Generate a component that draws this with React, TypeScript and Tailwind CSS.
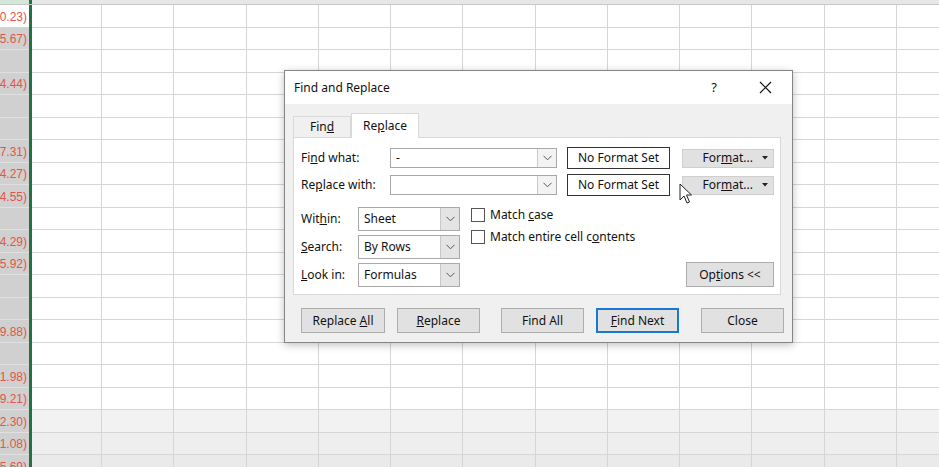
import React from "react";

const ROWS = 21;
const COLS = 12;
const vals: string[] = [
  "(1,890.23)",
  "(2,345.67)",
  "",
  "(1,234.44)",
  "",
  "",
  "(2,567.31)",
  "(3,214.27)",
  "(1,454.55)",
  "",
  "(2,114.29)",
  "(4,385.92)",
  "",
  "",
  "(1,239.88)",
  "",
  "(5,311.98)",
  "(4,369.21)",
  "(2,122.30)",
  "(1,461.08)",
  "(1,325.69)",
];

const rowBg = (r: number) =>
  r === 18 ? "bg-[#f2f2f2]" : r === 19 ? "bg-[#eeeeee]" : r >= 20 ? "bg-[#eaeaea]" : "bg-white";

function Chevron() {
  return (
    <svg width="9" height="6" viewBox="0 0 9 6" fill="none">
      <path d="M0.5 0.8 L4.5 4.8 L8.5 0.8" stroke="#555" strokeWidth="1" />
    </svg>
  );
}

function Combo({ w, text }: { w: number; text: string }) {
  return (
    <div className="flex h-[20px] border border-[#a9a9a9] bg-white" style={{ width: w }}>
      <div className="flex-1 pl-[5px] flex items-center text-[12px] leading-none">{text}</div>
      <div className="w-[19px] border-l border-[#c8c8c8] bg-[#f3f3f3] flex items-center justify-center">
        <Chevron />
      </div>
    </div>
  );
}

function Select({ text }: { text: string }) {
  return (
    <div className="flex h-[24px] w-[102px] border border-[#a9a9a9] bg-white">
      <div className="flex-1 pl-[5px] flex items-center text-[12px]">{text}</div>
      <div className="w-[19px] border-l border-[#c8c8c8] bg-[#e4e4e4] flex items-center justify-center">
        <Chevron />
      </div>
    </div>
  );
}

function FormatBtn() {
  return (
    <div className="ml-[12px] h-[19px] w-[92px] bg-[#e1e1e1] border border-[#cfcfcf] flex items-center justify-end pr-[5px] text-[12px]">
      <span>
        For<u>m</u>at...
      </span>
      <svg className="ml-[9px]" width="6" height="4" viewBox="0 0 6 4">
        <path d="M0 0 L6 0 L3 3.5 Z" fill="#222" />
      </svg>
    </div>
  );
}

function Btn({ children, w, ml, primary }: { children: React.ReactNode; w: number; ml: number; primary?: boolean }) {
  return (
    <div
      className={
        "h-[25px] flex items-center justify-center text-[12px] bg-[#e1e1e1] " +
        (primary ? "border-2 border-[#1a78d4]" : "border border-[#adadad]")
      }
      style={{ width: w, marginLeft: ml }}
    >
      {children}
    </div>
  );
}

function Checkbox({ children }: { children: React.ReactNode }) {
  return (
    <div className="h-[22px] flex items-center">
      <div className="w-[14px] h-[14px] border border-[#555] bg-white" />
      <div className="ml-[5px] text-[12px]">{children}</div>
    </div>
  );
}

export default function App() {
  return (
    <div
      className="relative w-[939px] h-[467px] overflow-hidden bg-white"
      style={{ fontFamily: '"Noto Sans", "Open Sans", sans-serif' }}
    >
      {/* spreadsheet */}
      <div className="flex flex-col">
        <div className="flex h-[5px] shrink-0 border-b border-[#c6c6c6] bg-[#e7e7e7]">
          <div className="w-[29px] bg-[#d3e7da]" />
          <div className="w-[3px] bg-[#217346]" />
        </div>
        {Array.from({ length: ROWS }).map((_, r) => (
          <div key={r} className="flex h-[22.5px] shrink-0">
            <div
              className={
                "w-[29px] shrink-0 overflow-hidden flex items-center justify-end pr-[2px] pt-[2px] border-b " +
                (r === 0 ? "bg-white border-[#d4d4d4]" : "bg-[#d0d0d0] border-[#e0e0e0]")
              }
              style={{ fontFamily: '"Liberation Sans", Arial, sans-serif' }}
            >
              <span className="whitespace-nowrap text-[12px] text-[#e2554a]">{vals[r]}</span>
            </div>
            <div className="w-[3px] shrink-0 bg-[#217346]" />
            <div className={"w-[70px] shrink-0 border-r border-b border-[#d6d6d6] " + rowBg(r)} />
            {Array.from({ length: COLS }).map((__, c) => (
              <div key={c} className={"w-[72.25px] shrink-0 border-r border-b border-[#d6d6d6] " + rowBg(r)} />
            ))}
          </div>
        ))}
      </div>

      {/* dialog */}
      <div className="absolute left-[284px] top-[70px] w-[509px] h-[273px] border border-[#858585] bg-[#f0f0f0] flex flex-col shadow-[0_2px_8px_rgba(0,0,0,0.25)] text-[#111]">
        <div className="h-[33px] bg-white flex items-center pl-[9px] text-[12px] shrink-0">
          <span>Find and Replace</span>
          <span className="ml-auto text-[13px] mr-[42px]">?</span>
          <svg className="mr-[20px]" width="13" height="13" viewBox="0 0 13 13">
            <path d="M1 1 L12 12 M12 1 L1 12" stroke="#111" strokeWidth="1.2" />
          </svg>
        </div>
        <div className="flex-1 px-[8px] pt-[9px]">
          {/* tabs */}
          <div className="flex h-[24px] items-end">
            <div className="h-[21px] w-[58px] border border-b-0 border-[#d9d9d9] bg-[#f0f0f0] flex items-center justify-center text-[12px]">
              <span>
                Fin<u>d</u>
              </span>
            </div>
            <div className="relative z-10 h-[25px] -mb-[1px] w-[68px] border border-b-0 border-[#d9d9d9] bg-white flex items-center justify-center text-[12px]">
              <span>
                Re<u>p</u>lace
              </span>
            </div>
          </div>
          {/* panel */}
          <div className="h-[158px] w-[488px] border border-[#d9d9d9] bg-white pl-[7px] flex flex-col">
            <div className="mt-[9px] h-[22px] flex items-center">
              <div className="w-[89px] text-[12px]">
                Fi<u>n</u>d what:
              </div>
              <Combo w={167} text="-" />
              <div className="ml-[10px] h-[22px] w-[103px] border-[1.5px] border-[#333] bg-white flex items-center justify-center text-[12px]">
                No Format Set
              </div>
              <FormatBtn />
            </div>
            <div className="mt-[5px] h-[22px] flex items-center">
              <div className="w-[89px] text-[12px]">
                Re<u>p</u>lace with:
              </div>
              <Combo w={167} text="" />
              <div className="ml-[10px] h-[22px] w-[103px] border-[1.5px] border-[#333] bg-white flex items-center justify-center text-[12px]">
                No Format Set
              </div>
              <FormatBtn />
            </div>
            <div className="mt-[11px] flex">
              <div className="flex flex-col gap-[4px]">
                <div className="flex items-center">
                  <div className="w-[57px] text-[12px]">
                    Wit<u>h</u>in:
                  </div>
                  <Select text="Sheet" />
                </div>
                <div className="flex items-center">
                  <div className="w-[57px] text-[12px]">
                    <u>S</u>earch:
                  </div>
                  <Select text="By Rows" />
                </div>
                <div className="flex items-center">
                  <div className="w-[57px] text-[12px]">
                    <u>L</u>ook in:
                  </div>
                  <Select text="Formulas" />
                </div>
              </div>
              <div className="ml-[11px] -mt-[3px] flex flex-col">
                <Checkbox>
                  Match <u>c</u>ase
                </Checkbox>
                <Checkbox>
                  Match entire cell c<u>o</u>ntents
                </Checkbox>
              </div>
              <div className="ml-auto mr-[6px] self-end">
                <div className="h-[25px] w-[88px] bg-[#e1e1e1] border border-[#adadad] flex items-center justify-center text-[12px]">
                  <span>
                    Op<u>t</u>ions &lt;&lt;
                  </span>
                </div>
              </div>
            </div>
          </div>
          {/* buttons */}
          <div className="mt-[13px] flex">
            <Btn w={84} ml={8}>
              <span>
                Replace <u>A</u>ll
              </span>
            </Btn>
            <Btn w={83} ml={12}>
              <span>
                <u>R</u>eplace
              </span>
            </Btn>
            <Btn w={83} ml={21}>
              <span>Find All</span>
            </Btn>
            <Btn w={83} ml={12} primary>
              <span>
                <u>F</u>ind Next
              </span>
            </Btn>
            <Btn w={83} ml={22}>
              <span>Close</span>
            </Btn>
          </div>
        </div>
      </div>

      {/* mouse cursor */}
      <svg className="absolute left-[679px] top-[183px]" width="14" height="22" viewBox="0 0 14 22">
        <path d="M1 1 L1 17 L5 13 L8 20 L10.5 19 L7.5 12 L12.5 12 Z" fill="white" stroke="#222" strokeWidth="1" strokeLinejoin="round" />
      </svg>
    </div>
  );
}
